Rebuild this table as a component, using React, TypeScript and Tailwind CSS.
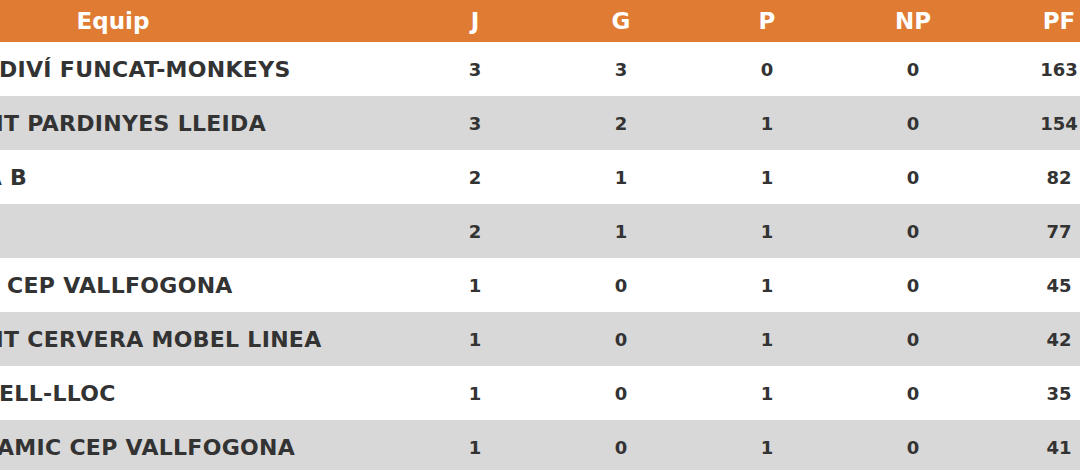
// team names are split where the visible part of the cell begins, the part
// before it is pushed out to the left of the page
const rows = [
  { lead: 'CB ALPICAT\u00a0', team: 'DIVÍ FUNCAT-MONKEYS', at: 'w-[175px]', j: 3, g: 3, p: 0, np: 0, pf: 163 },
  { lead: 'CB SAN', team: 'T PARDINYES LLEIDA', at: 'w-[180px]', j: 3, g: 2, p: 1, np: 0, pf: 154 },
  { lead: 'CB TÀRREGA\u00a0', team: 'B', at: 'w-[186px]', j: 2, g: 1, p: 1, np: 0, pf: 82 },
  { lead: 'CB TREMP', team: '', at: 'w-[172px]', j: 2, g: 1, p: 1, np: 0, pf: 77 },
  { lead: 'ESCOLA\u00a0', team: 'CEP VALLFOGONA', at: 'w-[183px]', j: 1, g: 0, p: 1, np: 0, pf: 45 },
  { lead: 'CB SAN', team: 'T CERVERA MOBEL LINEA', at: 'w-[180px]', j: 1, g: 0, p: 1, np: 0, pf: 42 },
  { lead: 'CB B', team: 'ELL-LLOC', at: 'w-[175px]', j: 1, g: 0, p: 1, np: 0, pf: 35 },
  { lead: 'CB DYN', team: 'AMIC CEP VALLFOGONA', at: 'w-[173px]', j: 1, g: 0, p: 1, np: 0, pf: 41 },
];

export default function App() {
  return (
    <div className="w-[1080px] h-[470px] overflow-hidden bg-white font-['DejaVu_Sans',Verdana,sans-serif] text-[#333333]">
      <table className="table-fixed border-collapse ml-[-176px] w-[1308px]">
        <colgroup>
          <col className="w-[578px]" />
          <col className="w-[146px]" />
          <col className="w-[146px]" />
          <col className="w-[146px]" />
          <col className="w-[146px]" />
          <col className="w-[146px]" />
        </colgroup>
        <thead className="bg-[#e07b33] text-white">
          <tr className="h-[42px] text-[23px] font-bold">
            <th className="text-center">Equip</th>
            <th className="text-center">J</th>
            <th className="text-center">G</th>
            <th className="text-center">P</th>
            <th className="text-center">NP</th>
            <th className="text-center">PF</th>
          </tr>
        </thead>
        <tbody>
          {rows.map((r, i) => (
            <tr key={i} className={`h-[54px] font-bold ${i % 2 === 1 ? 'bg-[#d8d8d8]' : 'bg-white'}`}>
              <td className="p-0 text-[22px]">
                <div className="flex whitespace-nowrap tracking-[0.3px]">
                  <div className={`flex shrink-0 justify-end ${r.at}`}>
                    <span>{r.lead}</span>
                  </div>
                  <span>{r.team}</span>
                </div>
              </td>
              <td className="text-center text-[18px]">{r.j}</td>
              <td className="text-center text-[18px]">{r.g}</td>
              <td className="text-center text-[18px]">{r.p}</td>
              <td className="text-center text-[18px]">{r.np}</td>
              <td className="text-center text-[18px]">{r.pf}</td>
            </tr>
          ))}
        </tbody>
      </table>
    </div>
  );
}
